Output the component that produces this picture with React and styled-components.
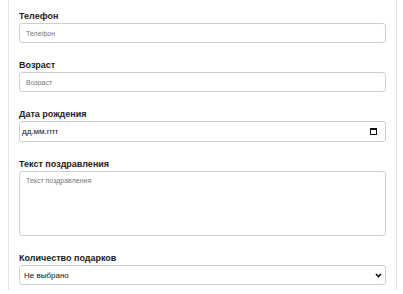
import React from 'react';
import styled, { createGlobalStyle } from 'styled-components';

const GlobalStyle = createGlobalStyle`
  body {
    margin: 0;
    background: #fff;
    font-family: "Liberation Sans", Arial, sans-serif;
  }
`;

const Page = styled.form`
  box-sizing: border-box;
  width: 389px;
  margin-left: 8px;
  padding: 10px 10px 5px;
  border-left: 1px solid #e4e4e4;
  border-right: 1px solid #e4e4e4;
`;

const Group = styled.div`
  margin-bottom: 16px;

  &:last-child {
    margin-bottom: 0;
  }
`;

const Label = styled.label`
  display: block;
  font-size: 9px;
  line-height: 12px;
  font-weight: bold;
  color: #222;
  margin-bottom: 1px;
`;

const Input = styled.input`
  box-sizing: border-box;
  display: block;
  width: 100%;
  height: ${(p) => p.$height || 20}px;
  padding: 0 6px;
  border: 1px solid #cfcfcf;
  border-radius: 3px;
  font-family: inherit;
  font-size: 7px;
  color: #222;
  outline: none;

  &::placeholder {
    color: #777;
  }
`;

const TextArea = styled.textarea`
  box-sizing: border-box;
  display: block;
  width: 100%;
  height: 65px;
  padding: 5px 6px;
  border: 1px solid #cfcfcf;
  border-radius: 3px;
  font-family: inherit;
  font-size: 7px;
  resize: none;
  outline: none;

  &::placeholder {
    color: #777;
  }
`;

const DateField = styled.div`
  box-sizing: border-box;
  display: flex;
  align-items: center;
  justify-content: space-between;
  height: 21px;
  padding: 0 8px 0 2px;
  border: 1px solid #cfcfcf;
  border-radius: 3px;
  font-size: 8px;
  color: #111;
`;

const SelectWrap = styled.div`
  position: relative;
`;

const Select = styled.select`
  box-sizing: border-box;
  display: block;
  width: 100%;
  height: 20px;
  padding: 0 4px;
  border: 1px solid #cfcfcf;
  border-radius: 3px;
  background: #fff;
  font-family: inherit;
  font-size: 8px;
  color: #111;
  appearance: none;
  outline: none;
`;

const Chevron = styled.svg`
  position: absolute;
  right: 4px;
  top: 8px;
  pointer-events: none;
`;

function CalendarIcon() {
  return (
    <svg width="7" height="7" viewBox="0 0 7 7">
      <rect x="0.5" y="0.5" width="6" height="6" fill="none" stroke="#111" strokeWidth="1" />
      <rect x="0" y="0" width="7" height="2" fill="#111" />
    </svg>
  );
}

function App() {
  return (
    <>
      <GlobalStyle />
      <Page onSubmit={(e) => e.preventDefault()}>
        <Group>
          <Label>Телефон</Label>
          <Input placeholder="Телефон" />
        </Group>
        <Group>
          <Label>Возраст</Label>
          <Input placeholder="Возраст" />
        </Group>
        <Group>
          <Label>Дата рождения</Label>
          <DateField>
            <span>дд.мм.гггг</span>
            <CalendarIcon />
          </DateField>
        </Group>
        <Group>
          <Label>Текст поздравления</Label>
          <TextArea placeholder="Текст поздравления" />
        </Group>
        <Group>
          <Label>Количество подарков</Label>
          <SelectWrap>
            <Select defaultValue="">
              <option value="">Не выбрано</option>
              <option value="1">1</option>
              <option value="2">2</option>
              <option value="3">3</option>
            </Select>
            <Chevron width="7" height="5" viewBox="0 0 7 5">
              <path d="M1 1 L3.5 3.5 L6 1" fill="none" stroke="#111" strokeWidth="1.6" />
            </Chevron>
          </SelectWrap>
        </Group>
      </Page>
    </>
  );
}

export default App;
